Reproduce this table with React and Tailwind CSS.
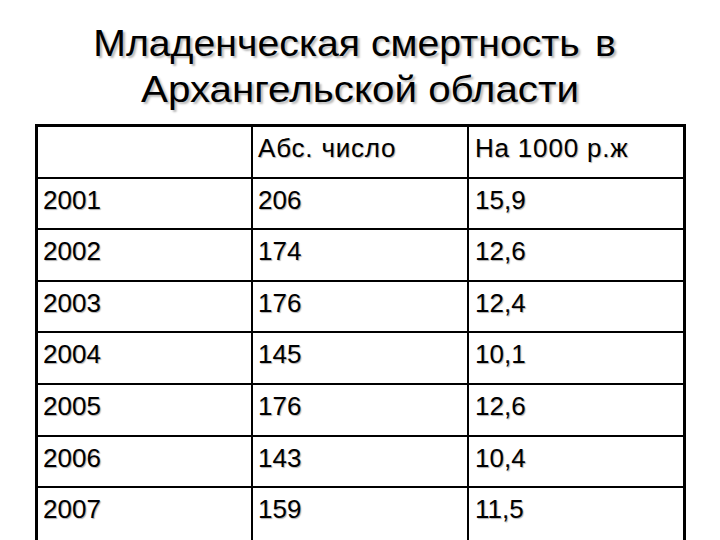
export default function App() {
  const rows = [
    ["2001", "206", "15,9"],
    ["2002", "174", "12,6"],
    ["2003", "176", "12,4"],
    ["2004", "145", "10,1"],
    ["2005", "176", "12,6"],
    ["2006", "143", "10,4"],
    ["2007", "159", "11,5"],
  ];
  const all = [["", "Абс. число", "На 1000 р.ж"], ...rows];
  return (
    <div className="w-[720px] h-[540px] overflow-hidden bg-white text-black font-['Liberation_Sans',Arial,sans-serif]">
      <div className="pt-[21px] text-center text-[36px] leading-[46px] [text-shadow:2px_2px_2px_#b8b8b8]">
        <div className="pr-[10px] scale-x-[1.09]">
          Младенческая смертность <span className="ml-[4px]">в</span>
        </div>
        <div className="scale-x-[1.12]">Архангельской области</div>
      </div>
      <div className="mt-[11px] ml-[35px] w-[651px] border-[3px] border-black">
        {all.map((r, i) => (
          <div
            key={i}
            className={
              "flex h-[51.6px] text-[26px] leading-[30px] whitespace-nowrap [text-shadow:1px_1px_1px_#b0b0b0] " +
              (i === 0 ? "tracking-[0.8px] " : "") +
              (i < all.length - 1 ? "border-b-2 border-black" : "")
            }
          >
            <div className="w-[215px] border-r-2 border-black pl-[5px] pt-[6px]">{r[0]}</div>
            <div className="w-[216px] border-r-2 border-black pl-[5px] pt-[6px]">{r[1]}</div>
            <div className="flex-1 pl-[6px] pt-[6px]">{r[2]}</div>
          </div>
        ))}
      </div>
    </div>
  );
}
